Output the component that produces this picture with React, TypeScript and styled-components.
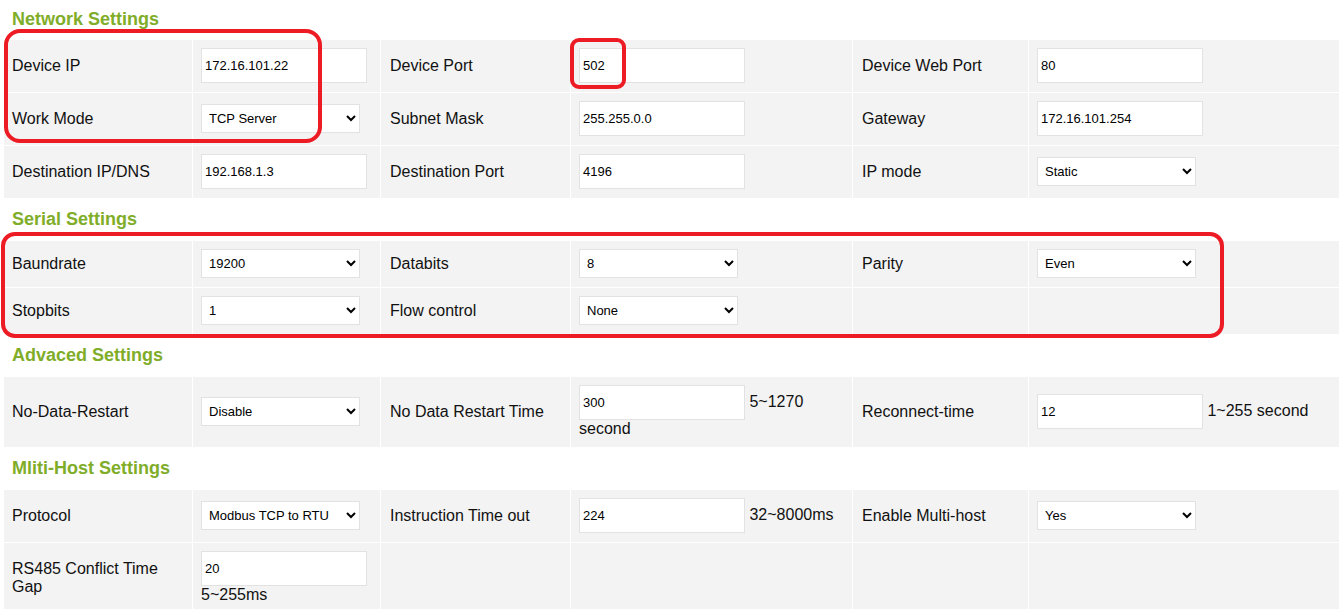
import React from "react";
import styled, { createGlobalStyle } from "styled-components";

const GlobalStyle = createGlobalStyle`
  html, body {
    margin: 0;
    padding: 0;
    background: #ffffff;
    overflow: hidden;
  }
  body {
    font-family: "Liberation Sans", Arial, sans-serif;
    color: #111111;
  }
`;

const Page = styled.div`
  position: relative;
  padding: 0 0 0 4px;
  width: 1340px;
  box-sizing: border-box;
`;

const Section = styled.section`
  display: flex;
  flex-direction: column;
`;

const Heading = styled.h3<{ $first?: boolean }>`
  margin: 0;
  padding: ${(p) => (p.$first ? "9px 0 11px 8px" : "11px 0 12px 8px")};
  font-size: 18px;
  line-height: 20px;
  font-weight: bold;
  color: #7fad29;
`;

const Grid = styled.div`
  display: grid;
  grid-template-columns: 188px 187px 189px 281px 175px 310px;
  gap: 1px;
  background: #ffffff;
`;

const Cell = styled.div<{ $label?: boolean }>`
  display: flex;
  align-items: center;
  padding: 8px 8px 9px ${(p) => (p.$label ? "9px" : "8px")};
  background: #f3f3f3;
  font-size: 16px;
  line-height: normal;
  color: #111111;
  min-width: 0;
  &:nth-child(6n + 1) {
    padding-left: 8px;
  }
`;

const Flow = styled.div`
  display: block;
`;

const TextInput = styled.input`
  box-sizing: border-box;
  width: 166px;
  height: 35px;
  padding: 0 3px;
  border: 1px solid #e2e2e2;
  background: #ffffff;
  font-family: "Liberation Sans", Arial, sans-serif;
  font-size: 13px;
  color: #000000;
  outline: none;
  vertical-align: baseline;
`;

const Select = styled.select`
  box-sizing: border-box;
  width: 159px;
  height: 29px;
  padding: 0 3px;
  border: 1px solid #e2e2e2;
  border-radius: 0;
  background: #ffffff;
  font-family: "Liberation Sans", Arial, sans-serif;
  font-size: 13px;
  color: #000000;
  outline: none;
`;

const Mark = styled.div<{ $radius: number }>`
  position: absolute;
  box-sizing: border-box;
  border: 4px solid #ed1c24;
  border-radius: ${(p) => p.$radius}px;
  pointer-events: none;
`;

type CellSpec =
  | { kind: "label"; text: string }
  | { kind: "input"; value: string; hint?: string }
  | { kind: "select"; value: string; options: string[] }
  | { kind: "empty" };

const L = (text: string): CellSpec => ({ kind: "label", text });
const I = (value: string, hint?: string): CellSpec => ({ kind: "input", value, hint });
const S = (value: string, options: string[]): CellSpec => ({ kind: "select", value, options });
const E: CellSpec = { kind: "empty" };

const sections: { title: string; rows: CellSpec[][] }[] = [
  {
    title: "Network Settings",
    rows: [
      [L("Device IP"), I("172.16.101.22"), L("Device Port"), I("502"), L("Device Web Port"), I("80")],
      [
        L("Work Mode"),
        S("TCP Server", ["TCP Server", "TCP Client", "UDP"]),
        L("Subnet Mask"),
        I("255.255.0.0"),
        L("Gateway"),
        I("172.16.101.254"),
      ],
      [
        L("Destination IP/DNS"),
        I("192.168.1.3"),
        L("Destination Port"),
        I("4196"),
        L("IP mode"),
        S("Static", ["Static", "DHCP"]),
      ],
    ],
  },
  {
    title: "Serial Settings",
    rows: [
      [
        L("Baundrate"),
        S("19200", ["9600", "19200", "38400", "115200"]),
        L("Databits"),
        S("8", ["7", "8"]),
        L("Parity"),
        S("Even", ["None", "Odd", "Even"]),
      ],
      [L("Stopbits"), S("1", ["1", "2"]), L("Flow control"), S("None", ["None", "RTS/CTS"]), E, E],
    ],
  },
  {
    title: "Advaced Settings",
    rows: [
      [
        L("No-Data-Restart"),
        S("Disable", ["Disable", "Enable"]),
        L("No Data Restart Time"),
        I("300", "5~1270 second"),
        L("Reconnect-time"),
        I("12", "1~255 second"),
      ],
    ],
  },
  {
    title: "Mliti-Host Settings",
    rows: [
      [
        L("Protocol"),
        S("Modbus TCP to RTU", ["Modbus TCP to RTU", "None"]),
        L("Instruction Time out"),
        I("224", "32~8000ms"),
        L("Enable Multi-host"),
        S("Yes", ["Yes", "No"]),
      ],
      [L("RS485 Conflict Time Gap"), I("20", "5~255ms"), E, E, E, E],
    ],
  },
];

function renderCell(c: CellSpec, key: string) {
  switch (c.kind) {
    case "label":
      return (
        <Cell key={key} $label>
          {c.text}
        </Cell>
      );
    case "input":
      return (
        <Cell key={key}>
          <Flow>
            <TextInput type="text" defaultValue={c.value} />
            {c.hint ? ` ${c.hint}` : null}
          </Flow>
        </Cell>
      );
    case "select":
      return (
        <Cell key={key}>
          <Select defaultValue={c.value}>
            {c.options.map((o) => (
              <option key={o} value={o}>
                {o}
              </option>
            ))}
          </Select>
        </Cell>
      );
    default:
      return <Cell key={key} />;
  }
}

export default function App() {
  return (
    <>
      <GlobalStyle />
      <Page>
        {sections.map((s, si) => (
          <Section key={s.title}>
            <Heading $first={si === 0}>{s.title}</Heading>
            <Grid>
              {s.rows.map((row, ri) => row.map((c, ci) => renderCell(c, `${ri}-${ci}`)))}
            </Grid>
          </Section>
        ))}
        <Mark $radius={16} style={{ left: 4, top: 29, width: 318, height: 114 }} />
        <Mark $radius={9} style={{ left: 570, top: 38, width: 56, height: 51 }} />
        <Mark $radius={14} style={{ left: 1, top: 232, width: 1223, height: 106 }} />
      </Page>
    </>
  );
}
